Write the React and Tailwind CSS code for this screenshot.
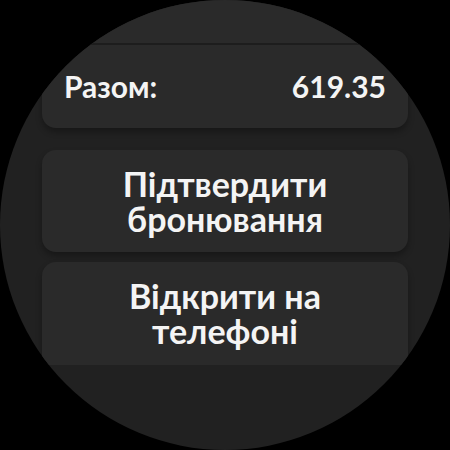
import React from "react";

const font = { fontFamily: "Lato, 'Noto Sans', sans-serif" };

const ActionButton = ({ label, className = "" }) => (
    <button
        className={`w-full rounded-[14px] bg-[#2a2a2a] text-[#f4f4f4] font-bold text-[34px] leading-[35px] text-center shadow-[0_4px_6px_rgba(0,0,0,0.3)] ${className}`}
    >
        {label}
    </button>
);

const App = () => {
    return (
        <div className="w-[450px] h-[450px] bg-black" style={font}>
            <div className="w-[450px] h-[450px] rounded-full bg-[#212121] overflow-hidden">
                <div className="h-[365px] overflow-hidden px-[42px]">
                    <div className="-mt-[40px] flex flex-col">
                        {/* summary card, top row scrolled off */}
                        <div className="rounded-b-[14px] bg-[#2a2a2a] shadow-[0_4px_6px_rgba(0,0,0,0.3)]">
                            <div className="h-[83px]" />
                            <div className="h-[2px] bg-[#1d1d1d]" />
                            <div className="h-[83px] flex items-center justify-between px-[22px] text-[30px] font-bold text-[#f4f4f4]">
                                <span>Разом:</span>
                                <span>619.35</span>
                            </div>
                        </div>

                        <ActionButton label={<>Підтвердити<br />бронювання</>} className="mt-[22px] h-[102px]" />
                        <ActionButton label={<>Відкрити на<br />телефоні</>} className="mt-[10px] h-[112px] pb-[10px]" />
                    </div>
                </div>
            </div>
        </div>
    );
};

export default App;
